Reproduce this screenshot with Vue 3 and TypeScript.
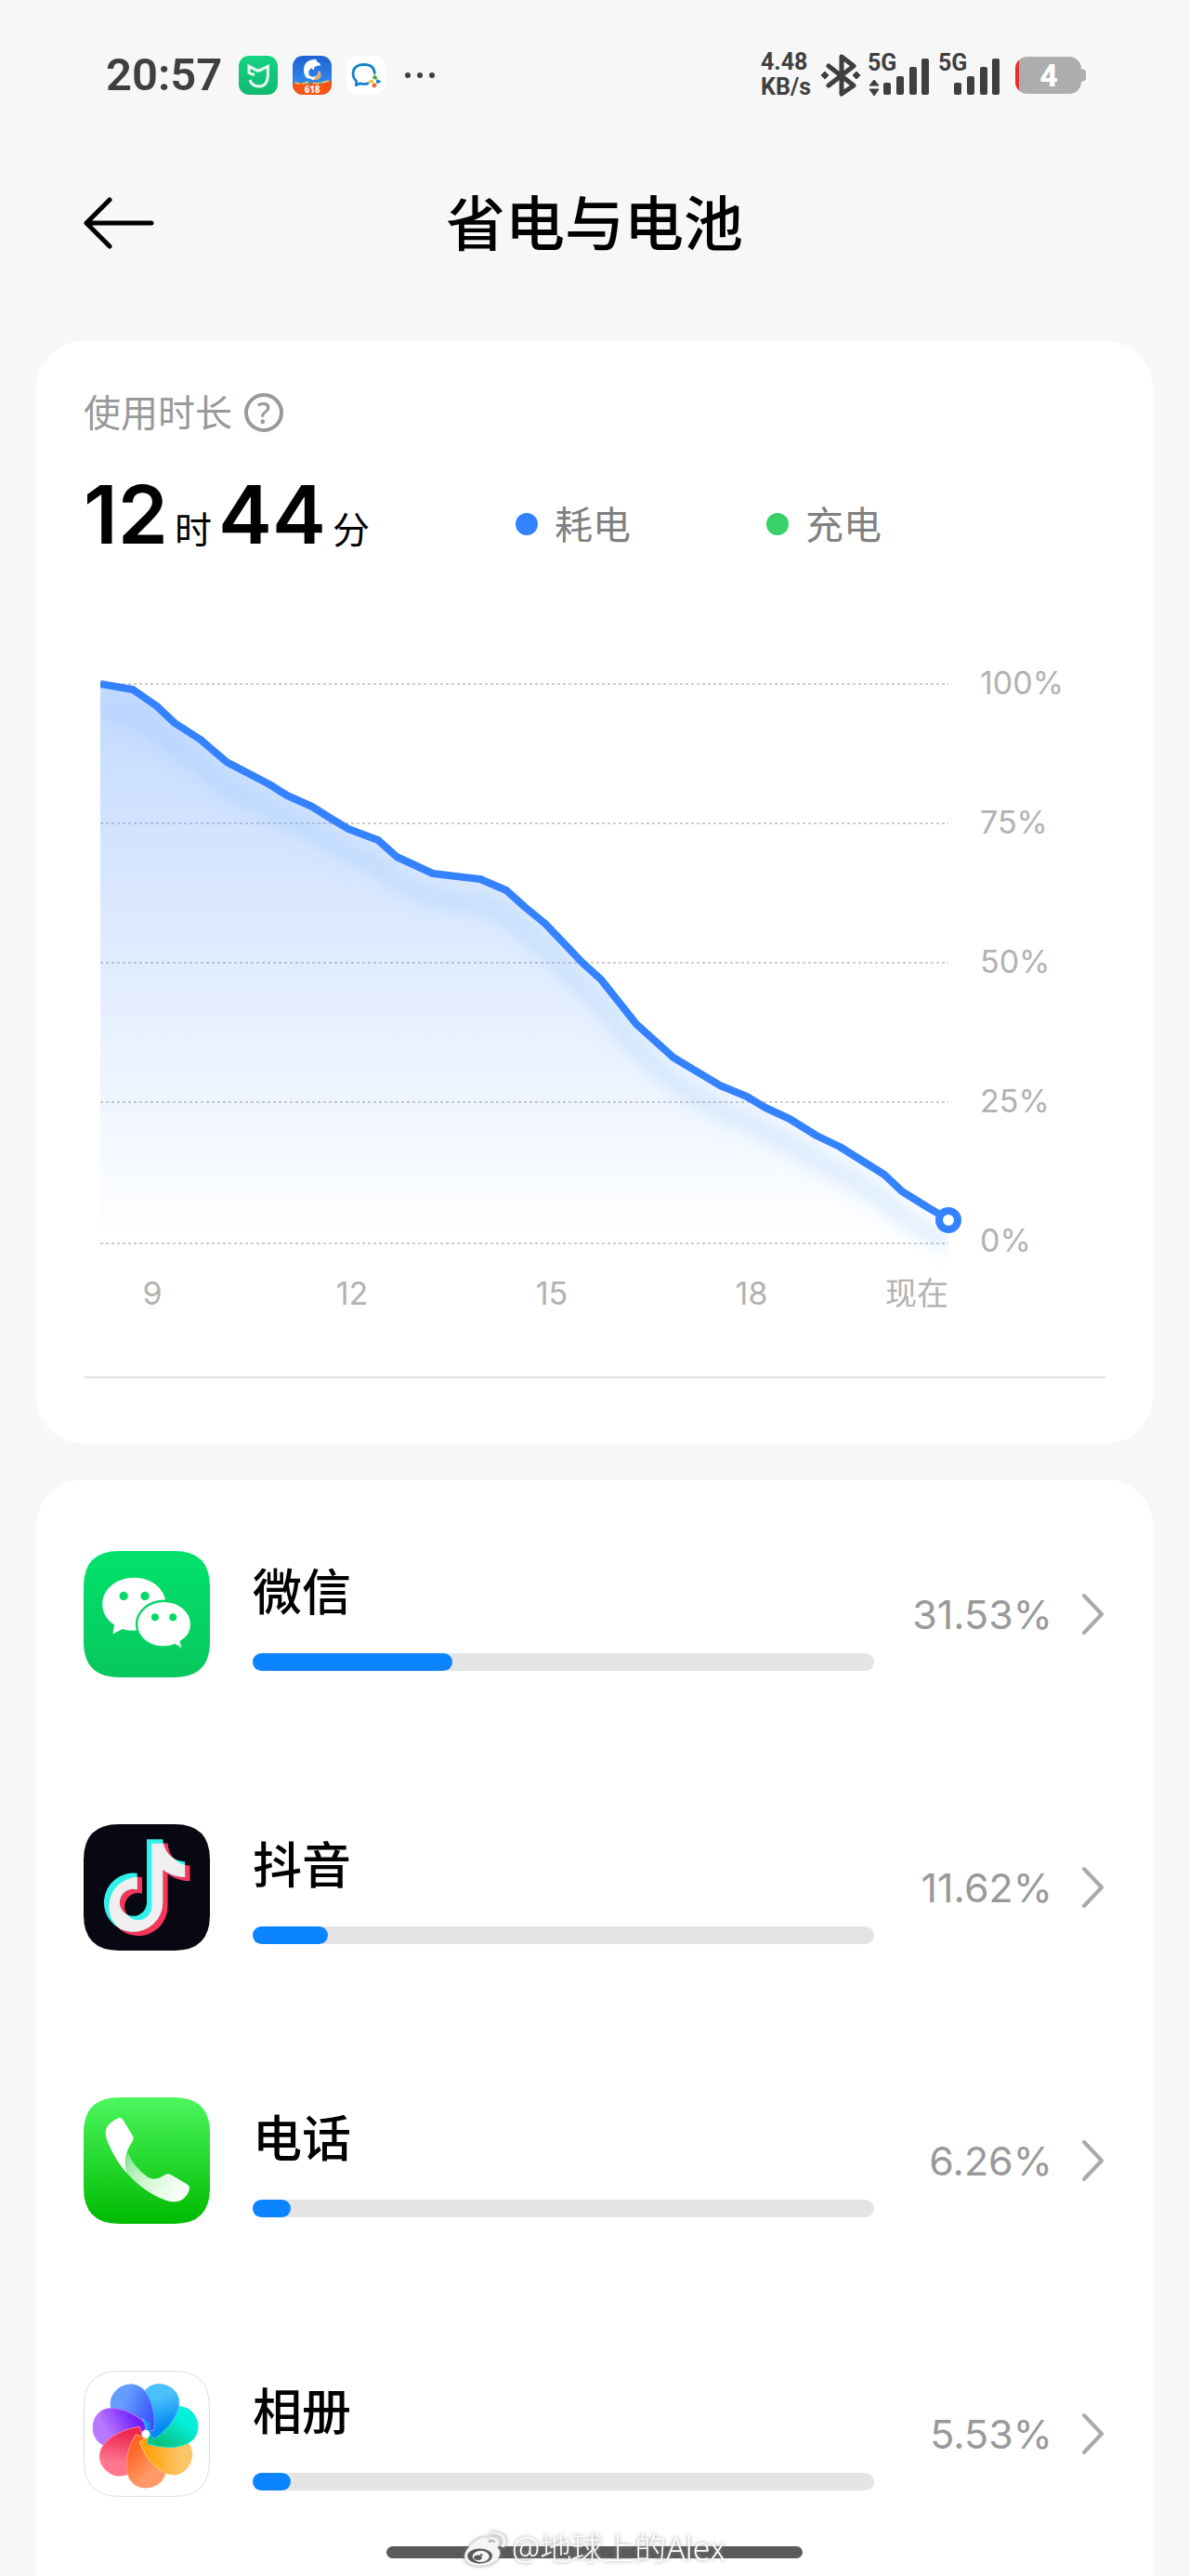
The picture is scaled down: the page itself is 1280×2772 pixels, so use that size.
<script setup lang="ts">
interface AppUsage {
  id: string
  name: string
  share: string
  fill: number
}

// [horizontal position, battery level in percent]
const levels: [number, number][] = [
  [18, 100], [53, 99], [79, 96], [98, 93], [126, 90], [154, 86], [177, 84],
  [200, 82], [219, 80], [246, 78], [265, 76], [285, 74], [317, 72], [337, 69],
  [376, 66], [427, 65], [455, 63], [475, 60], [497, 57], [537, 50],
  [557, 47], [595, 39], [635, 33], [685, 28], [714, 26], [734, 24], [760, 22],
  [789, 19], [814, 17], [862, 12], [881, 9], [910, 6], [931, 4],
]

const levelY = (level: number): number => 36 + (100 - level) * 6
const linePoints = levels.map(([x, level]) => `${x},${levelY(level)}`).join(' ')
const areaPoints = `18,638 ${linePoints} 931,638`

const yTicks = [
  { label: '100%', line: 36, text: 47 },
  { label: '75%', line: 186, text: 197 },
  { label: '50%', line: 336, text: 347 },
  { label: '25%', line: 486, text: 497 },
  { label: '0%', line: 638, text: 647 },
]
const xTicks = [
  { label: '9', x: 74 },
  { label: '12', x: 289 },
  { label: '15', x: 504 },
  { label: '18', x: 719 },
]

const apps: AppUsage[] = [
  { id: 'wechat', name: '微信', share: '31.53%', fill: 32.1 },
  { id: 'douyin', name: '抖音', share: '11.62%', fill: 12.1 },
  { id: 'phone', name: '电话', share: '6.26%', fill: 6.1 },
  { id: 'album', name: '相册', share: '5.53%', fill: 6.1 },
]

const petals = [
  { id: 'indigo', turn: -51.4, outer: '#659dff', inner: '#3b59fa' },
  { id: 'purple', turn: -102.8, outer: '#b878ff', inner: '#7322ff' },
  { id: 'red', turn: -154.3, outer: '#ff7590', inner: '#ec2850' },
  { id: 'orange', turn: 154.3, outer: '#ff9a68', inner: '#ff6423' },
  { id: 'yellow', turn: 102.8, outer: '#fcc566', inner: '#ffa20c' },
  { id: 'teal', turn: 51.4, outer: '#06efdc', inner: '#08c280' },
  { id: 'sky', turn: 0, outer: '#4cc0fb', inner: '#0489f3' },
]
const petalPath =
  'M318 314C350 292 398 245 398 196C396 160 368 137 330 137C296 139 273 166 273 197C274 240 290 295 318 314Z'
const notePath =
  'M292 148H344C347 190 376 219 416 220V271Q375 270 344 247V353A95.500 95.500 0 1 1 261 258V311A44 44 0 1 0 292 353Z'
</script>

<template>
  <div class="screen">
    <header class="status">
      <div class="status-side">
        <span class="clock">20:57</span>
        <svg class="badge" viewBox="531 90 126 126" aria-hidden="true">
          <defs>
            <linearGradient id="mi" x1="0" y1="0" x2="0" y2="1">
              <stop offset="0" stop-color="#17d383" />
              <stop offset="1" stop-color="#0fb970" />
            </linearGradient>
          </defs>
          <rect x="531" y="90" width="126" height="126" rx="34" fill="url(#mi)" />
          <path d="M564 148V124L587 136Q594 140 601 136L625 124V156Q623 189 596 189Q573 188 567 168M564 146L582 152" fill="none" stroke="#eafff5" stroke-width="9" />
        </svg>
        <svg class="badge" viewBox="705 90 126 126" aria-hidden="true">
          <defs>
            <clipPath id="tripClip"><rect x="705" y="90" width="126" height="126" rx="34" /></clipPath>
            <linearGradient id="trip" x1="0" y1="0" x2="0" y2="1">
              <stop offset="0" stop-color="#1f62d2" />
              <stop offset="1" stop-color="#3a98f5" />
            </linearGradient>
          </defs>
          <g clip-path="url(#tripClip)">
            <rect x="705" y="90" width="126" height="126" fill="url(#trip)" />
            <path d="M705 181L730 176L748 181L775 176L800 180L831 172V216H705Z" fill="#fb5316" />
            <path d="M712 176L730 182M735 181L755 174M770 178L790 181M798 177L822 171" stroke="#ffd35a" stroke-width="4" />
            <path d="M745 179L758 180M785 176L800 178" stroke="#59d68b" stroke-width="4" />
            <path d="M742 126Q748 104 773 102L783 101L781 107Q795 113 796 121Q783 122 775 127L774 137L766 130Q754 138 757 150Q761 158 770 160Q758 168 749 160Q738 147 742 126Z" fill="#fff" />
            <path d="M757 154Q768 163 784 154L790 138Q801 150 793 162Q777 173 761 164Z" fill="#fff" />
            <path d="M775 162Q788 156 789 138Q799 150 793 161Q785 168 775 168Z" fill="#f3a15b" />
            <text x="768" y="209" class="badge-text">618</text>
          </g>
        </svg>
        <svg class="badge" viewBox="880 90 126 126" aria-hidden="true">
          <rect x="880" y="90" width="126" height="126" rx="34" fill="#fff" />
          <path d="M971 146Q969 118 936 118Q900 120 901 150Q902 163 912 172L911 185L924 179Q937 184 949 179" fill="none" stroke="#157fc9" stroke-width="8" stroke-linejoin="round" stroke-linecap="round" />
          <path d="M963 162L971 151L980 162L974 167Z" fill="#35ab36" />
          <path d="M979 165L993 173L979 181L975 173Z" fill="#1780ca" />
          <path d="M965 180L973 178L978 187L970 194L962 188Z" fill="#ee6532" />
          <path d="M963 166L968 172L962 181L949 174Z" fill="#f4c522" />
        </svg>
        <svg class="dots" viewBox="0 0 34 8" aria-hidden="true">
          <circle cx="4" cy="4" r="3" /><circle cx="17" cy="4" r="3" /><circle cx="30" cy="4" r="3" />
        </svg>
      </div>
      <div class="status-side status-right">
        <div class="speed"><span>4.48</span><span>KB/s</span></div>
        <svg class="bluetooth" viewBox="0 0 42 46" aria-hidden="true">
          <path d="M8 13L35 34L22 43V3L35 13L8 34" fill="none" stroke="#3f3f3f" stroke-width="5" stroke-linejoin="round" stroke-linecap="round" />
          <path d="M4 19L8 23L4 27L0 23ZM38 19L42 23L38 27L34 23Z" fill="#3f3f3f" stroke="#3f3f3f" />
        </svg>
        <svg v-for="n in 2" :key="n" class="signal" viewBox="0 -10 68 66" aria-hidden="true">
          <text x="0" y="18" class="signal-text">5G</text>
          <path v-if="n === 1" d="M2 34L7 28L12 34ZM2 38H12L7 45Z" stroke="#3f3f3f" />
          <rect x="17" y="31" width="8" height="13" rx="2" />
          <rect x="31" y="24" width="8" height="20" rx="2" />
          <rect x="45" y="14" width="8" height="30" rx="2" />
          <rect x="58" y="5" width="8" height="39" rx="2" />
        </svg>
        <svg class="battery" viewBox="0 -10 76 62" aria-hidden="true">
          <defs><clipPath id="cell"><rect y="1" width="71" height="40" rx="13" /></clipPath></defs>
          <path d="M69 14Q76 14 76 18V24Q76 28 69 28Z" fill="#adadad" />
          <g clip-path="url(#cell)">
            <rect width="71" height="42" fill="#adadad" />
            <rect width="4" height="42" fill="#e62e2e" />
          </g>
          <text x="36" y="33" class="battery-text">4</text>
        </svg>
      </div>
    </header>

    <nav class="title-bar">
      <button class="back" type="button" aria-label="返回">
        <svg viewBox="0 0 76 56" aria-hidden="true">
          <path d="M73 28H3M28 3L3 28L28 53" fill="none" stroke="#000" stroke-width="5" stroke-linecap="round" stroke-linejoin="round" />
        </svg>
      </button>
      <h1>省电与电池</h1>
    </nav>

    <main>
      <section class="card summary">
        <div class="caption">
          <span>使用时长</span>
          <button class="help" type="button" aria-label="说明">?</button>
        </div>
        <div class="stats">
          <div class="duration"><b>12</b><span>时</span><b>44</b><span>分</span></div>
          <div class="legend"><i class="dot use"></i>耗电</div>
          <div class="legend"><i class="dot charge"></i>充电</div>
        </div>
        <svg class="chart" viewBox="0 0 1100 720" role="img" aria-label="电量">
          <defs>
            <linearGradient id="area" gradientUnits="userSpaceOnUse" x1="0" y1="36" x2="0" y2="638">
              <stop offset="0" stop-color="#3482ff" stop-opacity="0.3" />
              <stop offset="1" stop-color="#3482ff" stop-opacity="0" />
            </linearGradient>
            <clipPath id="plot"><rect x="18" y="0" width="913" height="700" /></clipPath>
            <filter id="soft" x="-10%" y="-10%" width="120%" height="120%"><feGaussianBlur stdDeviation="9" /></filter>
          </defs>
          <line v-for="tick in yTicks" :key="tick.label" x1="18" x2="931" :y1="tick.line" :y2="tick.line" class="grid-line" />
          <g clip-path="url(#plot)">
            <polygon :points="areaPoints" fill="url(#area)" />
            <polyline :points="linePoints" class="shade" transform="translate(0 27)" filter="url(#soft)" />
            <polyline :points="linePoints" class="level" />
          </g>
          <circle cx="931" cy="613" r="10" class="now" />
          <text v-for="tick in yTicks" :key="tick.label" x="965" :y="tick.text" class="tick">{{ tick.label }}</text>
          <text v-for="tick in xTicks" :key="tick.label" :x="tick.x" y="704" class="tick mid">{{ tick.label }}</text>
          <text x="931" y="704" class="tick end">现在</text>
        </svg>
        <hr />
      </section>

      <section class="card usage">
        <a v-for="app in apps" :key="app.id" class="row" href="#">
          <svg v-if="app.id === 'wechat'" class="icon" viewBox="88 87 410 410" aria-hidden="true">
            <defs>
              <linearGradient id="wx" x1="0" y1="0" x2="0" y2="1">
                <stop offset="0" stop-color="#03e26c" />
                <stop offset="1" stop-color="#07c75d" />
              </linearGradient>
            </defs>
            <path d="M203 87H383Q498 87 498 202V382Q498 497 383 497H203Q88 497 88 382V202Q88 87 203 87Z" fill="url(#wx)" />
            <path d="M252 174C195 174 149 211 149 260C149 287 164 311 188 327L183 352Q183 356 188 354L214 340Q232 346 257 345C330 343 355 305 355 255C350 206 306 174 252 174Z" fill="#fff" />
            <path d="M349 249C300 249 260 283 260 325C260 368 300 399 349 399Q369 399 384 392L406 405Q410 405 409 400L404 381C426 368 438 348 438 325C438 283 398 249 349 249Z" fill="#fff" stroke="#05d464" stroke-width="7" />
            <g fill="#05d867">
              <circle cx="218" cy="233" r="14" /><circle cx="287" cy="233" r="14" />
              <circle cx="320" cy="302" r="12" /><circle cx="378" cy="302" r="12" />
            </g>
          </svg>
          <svg v-else-if="app.id === 'douyin'" class="icon" viewBox="87 99 410 410" aria-hidden="true">
            <defs><clipPath id="note"><path :d="notePath" transform="translate(16 13)" /></clipPath></defs>
            <path d="M202 99H382Q497 99 497 214V394Q497 509 382 509H202Q87 509 87 394V214Q87 99 202 99Z" fill="#080812" />
            <path :d="notePath" fill="#f8355a" transform="translate(16 13)" />
            <path :d="notePath" fill="#30f2eb" />
            <path :d="notePath" fill="#efefef" clip-path="url(#note)" />
          </svg>
          <svg v-else-if="app.id === 'phone'" class="icon" viewBox="88 81 410 410" aria-hidden="true">
            <defs>
              <linearGradient id="call" x1="0" y1="0" x2="0" y2="1">
                <stop offset="0" stop-color="#4bf75e" />
                <stop offset="1" stop-color="#00ba00" />
              </linearGradient>
              <linearGradient id="fold" gradientUnits="userSpaceOnUse" x1="222" y1="280" x2="380" y2="400">
                <stop offset="0" stop-color="#8de795" />
                <stop offset="0.45" stop-color="#cff6d1" />
                <stop offset="1" stop-color="#f6fff5" />
              </linearGradient>
            </defs>
            <path d="M203 81H383Q498 81 498 196V376Q498 491 383 491H203Q88 491 88 376V196Q88 81 203 81Z" fill="url(#call)" />
            <path d="M232 260Q251 309 300 342Q316 349 334 342L354 331Q363 327 372 332L424 363Q434 370 431 380Q424 405 402 416Q385 423 362 417Q290 395 228 326Q221 290 232 260Z" fill="url(#fold)" />
            <path d="M216 154L248 206Q252 215 246 224Q236 240 230 254Q218 288 229 328Q190 284 166 225Q153 195 165 176Q180 154 203 147Q211 146 216 154Z" fill="#fff" />
          </svg>
          <svg v-else class="icon" viewBox="88 93 410 410" aria-hidden="true">
            <defs>
              <linearGradient v-for="petal in petals" :id="petal.id" :key="petal.id" gradientUnits="userSpaceOnUse" x1="325" y1="180" x2="355" y2="275">
                <stop offset="0" :stop-color="petal.outer" />
                <stop offset="1" :stop-color="petal.inner" />
              </linearGradient>
              <clipPath id="overlap"><path d="M240 110H430V325H303V264L240 218Z" /></clipPath>
            </defs>
            <path d="M203 95H383Q496 95 496 208V388Q496 501 383 501H203Q90 501 90 388V208Q90 95 203 95Z" fill="#fff" stroke="#dcdcdc" stroke-width="3" />
            <path v-for="petal in petals" :key="petal.id" :d="petalPath" :transform="`rotate(${petal.turn} 289 300)`" :fill="`url(#${petal.id})`" :stroke="petal.outer" stroke-width="3" />
            <g clip-path="url(#overlap)">
              <path :d="petalPath" transform="rotate(-51.4 289 300)" fill="url(#indigo)" stroke="#659dff" stroke-width="3" />
            </g>
            <circle cx="290" cy="298" r="13" fill="#fff" />
          </svg>
          <div class="detail">
            <span class="name">{{ app.name }}</span>
            <div class="track"><div class="fill" :style="{ width: app.fill + '%' }"></div></div>
          </div>
          <span class="share">{{ app.share }}</span>
          <svg class="chevron" viewBox="0 0 26 46" aria-hidden="true">
            <path d="M3 3L22 23L3 43" fill="none" stroke="#aaa" stroke-width="4" stroke-linecap="round" stroke-linejoin="round" />
          </svg>
        </a>
      </section>
    </main>

    <footer class="home">
      <div class="handle"></div>
      <div class="credit">
        <svg viewBox="180 300 90 116" preserveAspectRatio="none" aria-hidden="true">
          <path d="M215 324C229 315 235 325 230 339C244 333 253 340 248 354C263 373 248 413 213 413C184 413 174 386 189 357Q199 335 215 324Z" fill="#f5f5f5" />
          <ellipse cx="213" cy="382" rx="25" ry="24" fill="#595959" />
          <ellipse cx="215" cy="383" rx="17" ry="18" fill="#f5f5f5" />
          <circle cx="209" cy="387" r="8" fill="#595959" />
          <circle cx="216" cy="378" r="3" fill="#595959" />
          <path d="M234 324Q252 325 247 349M236 307Q270 310 260 350" fill="none" stroke="#f5f5f5" stroke-width="7" stroke-linecap="round" />
        </svg>
        <span>@地球上的Alex</span>
      </div>
    </footer>
  </div>
</template>

<style>
body {
  margin: 0;
  background: #f7f7f7;
}
</style>

<style scoped>
.screen {
  display: flex;
  flex-direction: column;
  min-height: 100vh;
  color: #000;
  font-family: "Noto Sans", "Noto Sans CJK SC", sans-serif;
}
button {
  padding: 0;
  border: 0;
  background: none;
  font: inherit;
}
svg {
  display: block;
  flex: none;
}
.status {
  display: flex;
  justify-content: space-between;
  align-items: center;
  height: 162px;
  padding: 0 111px 0 114px;
}
.status-side {
  display: flex;
  align-items: center;
  gap: 16px;
}
.clock {
  margin-right: 2px;
  color: #3f3f3f;
  font-family: Roboto, "Noto Sans CJK SC", sans-serif;
  font-size: 49px;
  font-weight: 600;
  line-height: 60px;
}
.badge {
  width: 42px;
  height: 42px;
}
.badge-text {
  fill: #fff;
  font-size: 29px;
  font-weight: 800;
  text-anchor: middle;
}
.dots {
  width: 34px;
  height: 8px;
  margin-left: 4px;
  fill: #3f3f3f;
}
.status-right {
  gap: 8px;
}
.speed {
  display: flex;
  flex-direction: column;
  margin-right: 3px;
  padding-bottom: 2px;
  color: #3f3f3f;
  font-family: Roboto, "Noto Sans CJK SC", sans-serif;
  font-size: 25px;
  font-weight: 700;
  line-height: 27px;
}
.bluetooth {
  width: 42px;
  height: 46px;
}
.signal {
  width: 68px;
  height: 66px;
  fill: #3f3f3f;
}
.signal-text {
  font-family: Roboto, "Noto Sans CJK SC", sans-serif;
  font-size: 25px;
  font-weight: 700;
}
.battery {
  width: 76px;
  height: 62px;
  margin-left: 7px;
}
.battery-text {
  fill: #fff;
  font-family: Roboto, "Noto Sans CJK SC", sans-serif;
  font-size: 34px;
  font-weight: 800;
  text-anchor: middle;
}
.title-bar {
  display: grid;
  grid-template-columns: 76px 1fr 76px;
  align-items: center;
  height: 156px;
  padding: 0 90px;
  margin-bottom: 49px;
}
.back svg {
  width: 76px;
  height: 56px;
}
h1 {
  margin: 0;
  font-size: 64px;
  font-weight: 500;
  line-height: 80px;
  text-align: center;
}
main {
  display: flex;
  flex: 1;
  flex-direction: column;
  gap: 39px;
  padding: 0 39px;
}
.card {
  background: #fff;
  border-radius: 50px 50px 0 0;
}
.summary {
  padding: 47px 51px 70px;
  border-radius: 50px;
}
.caption {
  display: flex;
  align-items: center;
  gap: 13px;
  color: #999;
  font-size: 40px;
  line-height: 60px;
}
.help {
  box-sizing: border-box;
  width: 42px;
  height: 42px;
  border: 4px solid #999;
  border-radius: 50%;
  color: #999;
  font-size: 32px;
  font-weight: 500;
  line-height: 34px;
}
.stats {
  display: grid;
  grid-template-columns: 465fr 270fr 365fr;
  align-items: center;
  height: 180px;
}
.duration {
  display: flex;
  align-items: baseline;
  gap: 7px;
  padding-bottom: 20px;
  font-size: 40px;
}
.duration b {
  font-family: Inter, "Noto Sans CJK SC", sans-serif;
  font-size: 87px;
  font-weight: 600;
  line-height: 120px;
}
.legend {
  display: flex;
  align-items: center;
  gap: 18px;
  color: #808080;
  font-size: 41px;
  line-height: 60px;
}
.dot {
  width: 24px;
  height: 24px;
  border-radius: 50%;
}
.use {
  background: #3482ff;
}
.charge {
  background: #36d167;
}
.chart {
  width: 100%;
  height: auto;
  margin-top: 46px;
}
.grid-line {
  stroke: #ccc;
  stroke-width: 2;
  stroke-dasharray: 3 3;
}
.shade {
  fill: none;
  stroke: #6db5f5;
  stroke-opacity: 0.22;
  stroke-width: 18;
}
.level {
  fill: none;
  stroke: #3482ff;
  stroke-width: 8;
  stroke-linejoin: round;
}
.now {
  fill: #fff;
  stroke: #3482ff;
  stroke-width: 8;
}
.tick {
  fill: #b2b2b2;
  font-family: Inter, "Noto Sans CJK SC", sans-serif;
  font-size: 34px;
  font-weight: 400;
}
.mid {
  text-anchor: middle;
}
.end {
  text-anchor: end;
}
hr {
  height: 2px;
  margin: 61px 0 0;
  border: 0;
  background: #e2e2e2;
}
.usage {
  flex: 1;
}
.row {
  display: flex;
  align-items: center;
  padding: 77px 51px 81px;
  color: inherit;
  text-decoration: none;
}
.icon {
  width: 136px;
  height: 136px;
}
.detail {
  flex: 1;
  margin: 0 0 0 46px;
  padding-bottom: 4px;
}
.name {
  display: block;
  margin-bottom: 26px;
  font-size: 53px;
  font-weight: 500;
  line-height: 80px;
}
.track {
  height: 19px;
  border-radius: 10px;
  background: #e4e4e4;
}
.fill {
  height: 100%;
  border-radius: 10px;
  background: #0d84ff;
}
.share {
  width: 192px;
  color: #999;
  font-family: Inter, "Noto Sans CJK SC", sans-serif;
  font-size: 43px;
  font-weight: 400;
  line-height: 60px;
  text-align: right;
}
.chevron {
  width: 26px;
  height: 46px;
  margin-left: 31px;
}
.home {
  position: fixed;
  bottom: 2px;
  left: 0;
  display: grid;
  width: 100%;
  place-items: center;
}
.handle {
  grid-area: 1 / 1;
  width: 35%;
  height: 13px;
  border-radius: 7px;
  background: #5a5a5a;
}
.credit {
  display: flex;
  grid-area: 1 / 1;
  align-items: center;
  gap: 4px;
  margin-bottom: 8px;
  color: #fff;
  font-size: 34px;
  font-weight: 300;
  line-height: 40px;
  text-shadow: 0 0 4px #888;
}
.credit svg {
  width: 48px;
  height: 39px;
  filter: drop-shadow(0 0 2px #888);
}
</style>
